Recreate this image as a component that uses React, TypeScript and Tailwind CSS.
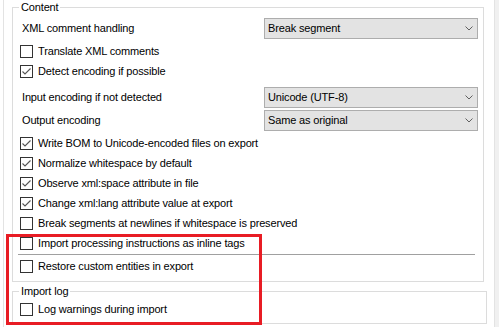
import type { ReactNode } from "react";

const font = { fontFamily: '"Liberation Sans", Arial, sans-serif' };

function CheckBox({ checked }: { checked?: boolean }) {
  return (
    <span className="flex h-[13px] w-[13px] shrink-0 items-center justify-center border border-[#333333] bg-white">
      {checked ? (
        <svg width="11" height="11" viewBox="0 0 11 11">
          <polyline points="1.5,5.5 4,8 9.5,2.5" fill="none" stroke="#555555" strokeWidth="1.1" />
        </svg>
      ) : null}
    </span>
  );
}

function CheckRow({ label, checked, className = "" }: { label: string; checked?: boolean; className?: string }) {
  return (
    <div className={`flex h-[20px] items-center gap-[5px] pl-[7px] ${className}`}>
      <CheckBox checked={checked} />
      <span className="whitespace-nowrap">{label}</span>
    </div>
  );
}

function Select({ value }: { value: string }) {
  return (
    <div className="flex h-[21px] w-[214px] items-center justify-between border border-[#adadad] bg-[#e3e3e3] pl-[3px] pr-[4px]">
      <span className="whitespace-nowrap">{value}</span>
      <svg width="8" height="5" viewBox="0 0 8 5">
        <polyline points="0.5,0.5 4,4 7.5,0.5" fill="none" stroke="#606060" strokeWidth="1" />
      </svg>
    </div>
  );
}

function SelectRow({ label, value, className = "" }: { label: string; value: string; className?: string }) {
  return (
    <div className={`flex h-[21px] items-center ${className}`}>
      <span className="w-[251px] whitespace-nowrap pl-[9px]">{label}</span>
      <Select value={value} />
    </div>
  );
}

function Group({ title, className = "", children }: { title: string; className?: string; children: ReactNode }) {
  return (
    <fieldset className={`border border-[#dcdcdc] ${className}`}>
      <legend className="ml-[6px] px-[2px] leading-[14px]">{title}</legend>
      {children}
    </fieldset>
  );
}

export default function App() {
  return (
    <div
      className="relative flex h-[327px] w-[499px] overflow-hidden bg-white text-[11px] tracking-[-0.15px] text-black"
      style={font}
    >
      <div className="w-[3px] shrink-0" />
      <div className="flex w-[492px] shrink-0 flex-col border-x border-[#e3e3e3] pl-[8px]">
        <Group title="Content" className="w-[472px] pb-[5px]">
          <SelectRow label="XML comment handling" value="Break segment" className="mt-[4px]" />
          <CheckRow label="Translate XML comments" className="mt-[2px]" />
          <CheckRow label="Detect encoding if possible" checked />
          <SelectRow label="Input encoding if not detected" value="Unicode (UTF-8)" className="mt-[6px]" />
          <SelectRow label="Output encoding" value="Same as original" className="mt-[2px]" />
          <CheckRow label="Write BOM to Unicode-encoded files on export" checked className="mt-[2px]" />
          <CheckRow label="Normalize whitespace by default" checked />
          <CheckRow label="Observe xml:space attribute in file" checked />
          <CheckRow label="Change xml:lang attribute value at export" checked />
          <CheckRow label="Break segments at newlines if whitespace is preserved" />
          <CheckRow label="Import processing instructions as inline tags" />
          <div className="ml-[5px] mt-[1px] h-px w-[457px] bg-[#a0a0a0]" />
          <CheckRow label="Restore custom entities in export" className="mt-[1px]" />
        </Group>
        <Group title="Import log" className="mt-[2px] w-[475px] pb-[4px]">
          <CheckRow label="Log warnings during import" className="mt-[1px]" />
        </Group>
      </div>
      <div className="flex-1 bg-[#f0f0f0]" />

      <div className="pointer-events-none absolute left-[6px] top-[234px] h-[91px] w-[256px] border-[3px] border-[#e81c24]" />
    </div>
  );
}
